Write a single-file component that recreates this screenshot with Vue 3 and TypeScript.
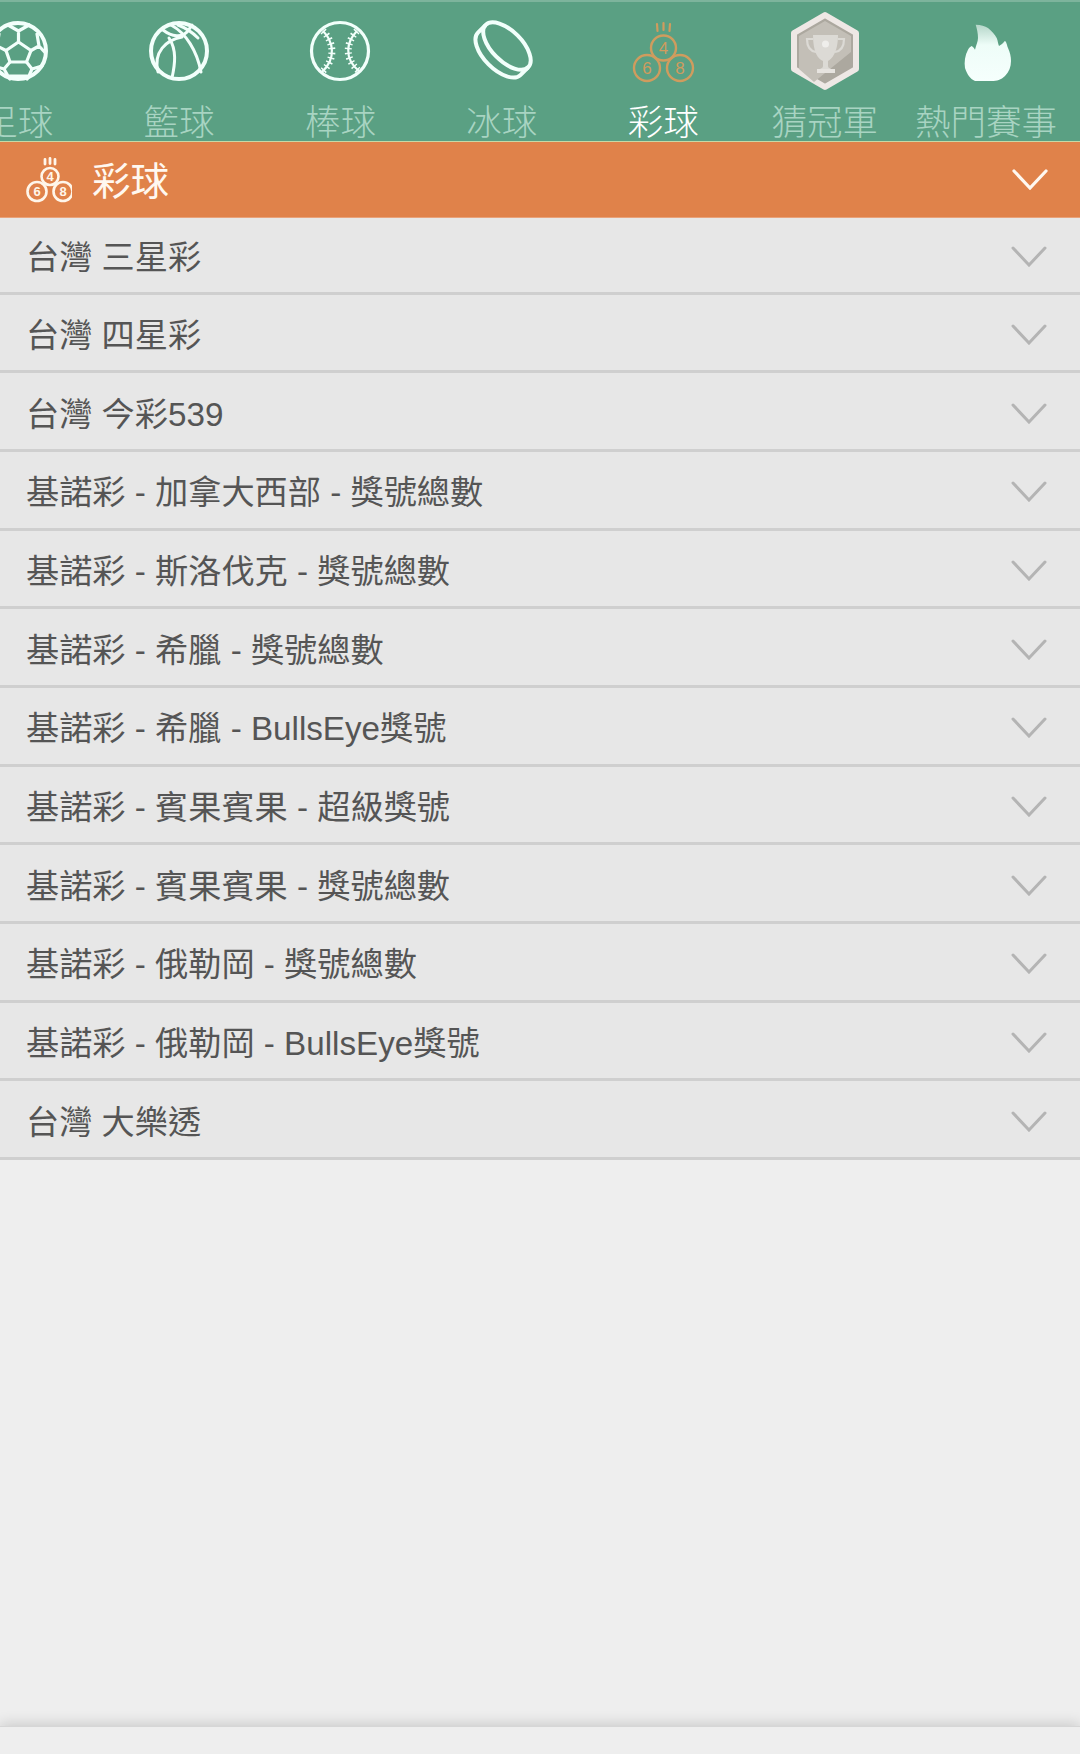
<template>
  <div class="page">
    <!-- 顶部分类 -->
    <nav class="sport-nav">
      <div v-for="item in sports" :key="item.key" class="sport-item" :class="{ active: item.key === 'lottery' }">
        <svg class="sport-icon" viewBox="-5 -5 80 80">
          <g v-if="item.key === 'soccer'" fill="none" stroke="#f2fffb" stroke-width="3.200" stroke-linejoin="round" stroke-linecap="round">
            <circle cx="35" cy="35" r="28" stroke-width="4" />
            <path d="M35.500 26 48 34.500 43.500 46H27L23 34.500Z" />
            <path d="M35.500 26V15L25 9M35.500 15 46 9M48 34.500 56 30 54 18M56 30 62.500 37M43.500 46 49 53 59 50M49 53 46 60 25 60 21 53 11 50M27 46 21 53M23 34.500 14 30 16 18M14 30 7.500 37M46 60 44 63M25 60 27 63" />
          </g>
          <g v-else-if="item.key === 'basketball'" fill="none" stroke="#f2fffb" stroke-width="3" stroke-linecap="round">
            <circle cx="35" cy="35" r="28" stroke-width="4" />
            <path d="M27 9C42 17 53 35 57 56" />
            <path d="M38 21C22 24 9 36 14 56" />
            <path d="M25 22C33 34 31 48 28 62" />
            <path d="M19 14C28 21 38 22 44 15 46 12 47 10 48 9" />
            <path d="M34 9C42 12 48 16 54 22" />
          </g>
          <g v-else-if="item.key === 'baseball'" fill="none" stroke="#f2fffb" stroke-width="3">
            <circle cx="35" cy="35" r="28.500" stroke-width="3.200" />
            <path d="M18 15C28 25 32 42 17 56" stroke-width="2.200" />
            <path d="M52 15C42 25 38 42 54 55" stroke-width="2.200" />
            <path d="M18 15C28 25 32 42 17 56" stroke-width="7" stroke-dasharray="1.500 3.300" />
            <path d="M52 15C42 25 38 42 54 55" stroke-width="7" stroke-dasharray="1.500 3.300" />
          </g>
          <g v-else-if="item.key === 'hockey'" fill="none" stroke="#f2fffb" stroke-width="4" transform="rotate(45 35 35)">
            <ellipse cx="35" cy="28" rx="30" ry="15" />
            <path d="M5 28V39C5 47 18 54 35 54S65 47 65 39V28" />
          </g>
          <g v-else-if="item.key === 'lottery'">
            <path d="M29.500 15 29 8M35.500 14V7M41.500 15 42 8" fill="none" stroke="#cf9c5e" stroke-width="2.200" stroke-linecap="round" />
            <g fill="none" stroke="#cf9c5e" stroke-width="2.400">
              <circle cx="35.500" cy="32" r="12.500" />
              <circle cx="19" cy="52" r="13" />
              <circle cx="52" cy="52" r="13" />
            </g>
            <g class="ball-text" fill="#cf9c5e">
              <text x="35.500" y="38">4</text>
              <text x="19" y="58">6</text>
              <text x="52" y="58">8</text>
            </g>
          </g>
          <g v-else-if="item.key === 'champion'">
            <path d="M35 -1 66 17V53L35 71 4 53V17Z" fill="#aca89f" stroke="#eee8e5" stroke-width="6" stroke-linejoin="round" />
            <path d="M35 5 61 20V36L24 66 9 53V20Z" fill="#c3bfb7" />
            <path d="M23 19H48C48 36 42 43 38 45V50C38 52 40 52 41 53H30C31 52 33 52 33 50V45C28 43 23 36 23 19Z" fill="#dcdad5" />
            <path d="M23 23H17C17 31 20 35 26 36M48 23H54C54 31 51 35 45 36" fill="none" stroke="#dcdad5" stroke-width="2.200" />
            <rect x="27" y="53" width="18" height="4" fill="#e6e3df" />
            <circle cx="35.500" cy="28" r="3.500" fill="#efeeeb" />
          </g>
          <g v-else>
            <path d="M24.700 8.700C30 9 34 10 37 12 41 15 44 19 45.700 22 47 25 47 28 48 30 50 29 52 27 54 24.700 56 27 56 30 57 32 59 36 60 41 60 45 60 51 58 56 54 60 50 64 46 65 40.700 65H24C19 63 16 58 14 52 13 46 14 39 17 33.700 18 32 19 31 20.700 30 22 31 23 32 24 33.700 25 29 27 26 27 22 27 17 26 13 24.700 8.700Z" fill="url(#flameFill)" />
          </g>
          <defs>
            <linearGradient id="flameFill" x1="0" y1="0" x2="0" y2="1">
              <stop offset="0" stop-color="#b5d6c9" />
              <stop offset="0.36" stop-color="#eefdf8" />
              <stop offset="1" stop-color="#f6fffd" />
            </linearGradient>
          </defs>
        </svg>
        <span class="sport-label">{{ item.label }}</span>
      </div>
    </nav>

    <!-- 当前分类标题 -->
    <header class="section-head">
      <div class="section-title">
        <svg class="head-icon" viewBox="0 0 48 48">
          <path d="M21 8V3.500M26 7.500V2.500M31 8V3.500" fill="none" stroke="#fff6ea" stroke-width="2.800" stroke-linecap="round" />
          <g fill="none" stroke="#fff6ea" stroke-width="2.600">
            <circle cx="26" cy="20.500" r="8.500" />
            <circle cx="13" cy="35.500" r="9.500" />
            <circle cx="39" cy="35.500" r="9.500" />
          </g>
          <g class="head-ball-text" fill="#fff6ea">
            <text x="26" y="25">4</text>
            <text x="13" y="40">6</text>
            <text x="39" y="40">8</text>
          </g>
        </svg>
        <span class="section-name">彩球</span>
      </div>
      <svg class="chevron" viewBox="0 0 36 21">
        <path d="M2 2 18 19 34 2" fill="none" stroke="#fff8f0" stroke-width="3.200" stroke-linecap="round" />
      </svg>
    </header>

    <ul class="league-list">
      <li v-for="name in leagues" :key="name" class="league-row">
        <span>{{ name }}</span>
        <svg class="chevron row-chevron" viewBox="0 0 36 21">
          <path d="M2 2 18 19 34 2" fill="none" stroke="#b4b4b4" stroke-width="3" stroke-linecap="round" />
        </svg>
      </li>
    </ul>

    <div class="filler"></div>
    <div class="bottom-bar"></div>
  </div>
</template>

<script setup lang="ts">
interface SportItem {
  key: string;
  label: string;
}

const sports: SportItem[] = [
  { key: 'soccer', label: '足球' },
  { key: 'basketball', label: '籃球' },
  { key: 'baseball', label: '棒球' },
  { key: 'hockey', label: '冰球' },
  { key: 'lottery', label: '彩球' },
  { key: 'champion', label: '猜冠軍' },
  { key: 'hot', label: '熱門賽事' },
];

const leagues: string[] = [
  '台灣 三星彩',
  '台灣 四星彩',
  '台灣 今彩539',
  '基諾彩 - 加拿大西部 - 獎號總數',
  '基諾彩 - 斯洛伐克 - 獎號總數',
  '基諾彩 - 希臘 - 獎號總數',
  '基諾彩 - 希臘 - BullsEye獎號',
  '基諾彩 - 賓果賓果 - 超級獎號',
  '基諾彩 - 賓果賓果 - 獎號總數',
  '基諾彩 - 俄勒岡 - 獎號總數',
  '基諾彩 - 俄勒岡 - BullsEye獎號',
  '台灣 大樂透',
];
</script>

<style>
html,
body {
  margin: 0;
  background: #eeeeee;
}
</style>

<style scoped>
.page {
  width: 1080px;
  height: 1754px;
  display: flex;
  flex-direction: column;
  overflow: hidden;
  background: #eeeeee;
  font-family: "Liberation Sans", "Noto Sans CJK TC", sans-serif;
}

.sport-nav {
  flex: none;
  display: flex;
  width: 1143px;
  height: 130px;
  margin-left: -63px;
  padding-top: 9px;
  border-top: 2px solid #7db49c;
  border-bottom: 1px solid #c7d9a6;
  background: #5aa083;
}

.sport-item {
  flex: none;
  width: 161.400px;
  height: 130px;
  display: flex;
  flex-direction: column;
  align-items: center;
}

.sport-icon {
  width: 80px;
  height: 80px;
  flex: none;
}

.sport-label {
  margin-top: 10px;
  line-height: 38px;
  font-size: 35.500px;
  color: #a8d4c2;
  white-space: nowrap;
  font-family: "Noto Sans CJK TC", sans-serif;
  font-weight: 300;
}

.active .sport-label {
  color: #ffffff;
}

.ball-text {
  font-family: "Liberation Sans", sans-serif;
  font-size: 17px;
  text-anchor: middle;
}

.head-ball-text {
  font-family: "Liberation Sans", sans-serif;
  font-weight: 700;
  font-size: 13px;
  text-anchor: middle;
}

.section-head {
  flex: none;
  height: 76px;
  box-sizing: border-box;
  display: flex;
  align-items: center;
  justify-content: space-between;
  padding: 0 32px 0 24px;
  background: #e0824a;
  border-bottom: 1px solid #e9a27a;
}

.section-title {
  display: flex;
  align-items: center;
  gap: 20px;
  color: #fff8f0;
  font-size: 38.500px;
  font-family: "Noto Sans CJK TC", sans-serif;
}

.section-name {
  margin-bottom: 4px;
}

.head-icon {
  width: 48px;
  height: 48px;
}

.chevron {
  width: 36px;
  height: 21px;
  flex: none;
}

.row-chevron {
  margin-top: 4px;
}

.league-list {
  list-style: none;
  margin: 0;
  padding: 0;
  flex: none;
}

.league-row {
  height: 78.700px;
  box-sizing: border-box;
  display: flex;
  align-items: center;
  justify-content: space-between;
  padding: 0 33px 0 26px;
  background: #e7e7e7;
  border-bottom: 3px solid #cfcfcf;
  color: #555555;
  font-size: 33.200px;
  white-space: nowrap;
}

.league-row:first-child {
  height: 76.500px;
}

.filler {
  flex: 1;
}

.bottom-bar {
  flex: none;
  height: 27px;
  background: #eeeeee;
  box-shadow: 0 -2px 14px rgba(0, 0, 0, 0.16);
  border-top: 1px solid #d6d6d6;
}
</style>
